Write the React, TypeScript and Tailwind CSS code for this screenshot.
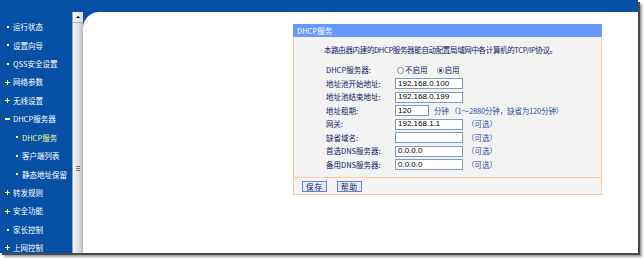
import React from 'react';

type MenuItem = {
  label: string;
  mark: 'dot' | 'plus' | 'minus';
  sub?: boolean;
  active?: boolean;
};

const menu: MenuItem[] = [
  { label: '运行状态', mark: 'dot' },
  { label: '设置向导', mark: 'dot' },
  { label: 'QSS安全设置', mark: 'dot' },
  { label: '网络参数', mark: 'plus' },
  { label: '无线设置', mark: 'plus' },
  { label: 'DHCP服务器', mark: 'minus' },
  { label: 'DHCP服务', mark: 'dot', sub: true, active: true },
  { label: '客户端列表', mark: 'dot', sub: true },
  { label: '静态地址保留', mark: 'dot', sub: true },
  { label: '转发规则', mark: 'plus' },
  { label: '安全功能', mark: 'plus' },
  { label: '家长控制', mark: 'dot' },
  { label: '上网控制', mark: 'plus' },
];

const Mark = ({ type }: { type: MenuItem['mark'] }) => {
  if (type === 'plus') {
    return (
      <span className="relative w-[5px] h-[5px] shrink-0">
        <span className="absolute left-0 top-[2px] w-[5px] h-[1px] bg-[#ffff66]" />
        <span className="absolute left-[2px] top-0 w-[1px] h-[5px] bg-[#ffff66]" />
      </span>
    );
  }
  if (type === 'minus') {
    return <span className="w-[5px] h-[1.5px] bg-[#ffff66] shrink-0" />;
  }
  return <span className="w-[2px] h-[2px] mx-[1.5px] bg-[#ffff66] shrink-0" />;
};

const Sidebar = () => (
  <div className="w-[72px] shrink-0 pt-[5.5px] text-[7.5px] text-white">
    {menu.map((m) => (
      <div
        key={m.label}
        className={`h-[18.45px] flex items-center gap-[2px] ${m.sub ? 'pl-[14px]' : 'pl-[5px]'}`}
      >
        <Mark type={m.mark} />
        <span className={`ml-[1px] whitespace-nowrap ${m.active ? 'text-[#eeff99]' : ''}`}>{m.label}</span>
      </div>
    ))}
  </div>
);

const Scrollbar = () => (
  <div className="w-[11px] shrink-0 flex flex-col bg-gradient-to-r from-[#f4f4f4] via-[#e2e2e2] to-[#bdbdbd] border-l border-[#9ab]">
    <div className="h-[11px] flex items-center justify-center bg-gradient-to-r from-[#fafafa] to-[#d8d8d8] border-b border-[#aaa]">
      <span className="w-0 h-0 border-l-[2px] border-r-[2px] border-b-[2px] border-l-transparent border-r-transparent border-b-black" />
    </div>
    <div className="flex-1 flex flex-col justify-start pt-[143px] items-center">
      <span className="w-[4px] h-[1px] bg-[#777]" />
      <span className="w-[4px] h-[1px] bg-[#777] mt-[1px]" />
      <span className="w-[4px] h-[1px] bg-[#777] mt-[1px]" />
    </div>
  </div>
);

const TextInput = ({ value, w = 'w-[68px]' }: { value: string; w?: string }) => (
  <div className={`${w} h-[11px] shrink-0 border border-[#7f9db9] bg-white pl-[2px] flex items-center text-[8px] text-black font-['Liberation_Sans',sans-serif] leading-none`}>
    {value}
  </div>
);

const Radio = ({ checked }: { checked?: boolean }) => (
  <span className="w-[7px] h-[7px] rounded-full border border-[#8a8a8a] bg-white flex items-center justify-center shrink-0">
    {checked && <span className="w-[3px] h-[3px] rounded-full bg-[#1c3c78]" />}
  </span>
);

const Row = ({ label, children }: { label: string; children: React.ReactNode }) => (
  <div className="h-[13.5px] flex items-center">
    <div className="w-[69px] shrink-0 whitespace-nowrap text-[#10206a]">{label}</div>
    {children}
  </div>
);

const Hint = ({ text }: { text: string }) => (
  <span className="ml-[4px] whitespace-nowrap text-[#2b4da5]">{text}</span>
);

const DhcpPanel = () => (
  <div className="w-[309px] text-[7.5px] leading-[10px]">
    <div className="h-[13px] bg-[#6699ff] text-white pl-[4px] flex items-center">DHCP服务</div>
    <div className="bg-[#f3f3f3] border-x border-b border-[#ffcc99]">
      <div className="pl-[30px] pt-[8px] text-[#10206a] whitespace-nowrap tracking-[-0.35px]">
        本路由器内建的DHCP服务器能自动配置局域网中各计算机的TCP/IP协议。
      </div>
      <div className="pl-[32px] mt-[8.25px]">
        <Row label="DHCP服务器:">
          <div className="flex items-center ml-[2px] text-[#10206a]">
            <Radio />
            <span className="ml-[1px]">不启用</span>
            <span className="ml-[9px]"><Radio checked /></span>
            <span className="ml-[1px]">启用</span>
          </div>
        </Row>
        <Row label="地址池开始地址:">
          <TextInput value="192.168.0.100" />
        </Row>
        <Row label="地址池结束地址:">
          <TextInput value="192.168.0.199" />
        </Row>
        <Row label="地址租期:">
          <TextInput value="120" w="w-[34px]" />
          <span className="ml-[5px] whitespace-nowrap text-[#2b4da5] tracking-[-0.15px]">分钟 （1～2880分钟，缺省为120分钟）</span>
        </Row>
        <Row label="网关:">
          <TextInput value="192.168.1.1" />
          <Hint text="（可选）" />
        </Row>
        <Row label="缺省域名:">
          <TextInput value="" />
          <Hint text="（可选）" />
        </Row>
        <Row label="首选DNS服务器:">
          <TextInput value="0.0.0.0" />
          <Hint text="（可选）" />
        </Row>
        <Row label="备用DNS服务器:">
          <TextInput value="0.0.0.0" />
          <Hint text="（可选）" />
        </Row>
      </div>
      <div className="mt-[5.75px] border-t border-[#ffcc99] pt-[3px] pb-[2px] pl-[8px] flex gap-[10px]">
        <button className="w-[25px] h-[11px] border border-[#6a7fcf] bg-[#e6e8f4] text-[#10206a] text-[7.5px] leading-none tracking-[1px]">保存</button>
        <button className="w-[25px] h-[11px] border border-[#6a7fcf] bg-[#e6e8f4] text-[#10206a] text-[7.5px] leading-none tracking-[1px]">帮助</button>
      </div>
    </div>
  </div>
);

export default function App() {
  return (
    <div className="w-[644px] h-[258px] bg-white overflow-hidden font-['Noto_Sans_CJK_SC',sans-serif]">
      <div className="w-[638px] h-[253px] bg-[#0650a6] flex flex-col shadow-[2px_2px_0_#4a4a4a,4px_4px_2px_#a0a0a0]">
        <div className="h-[12px] shrink-0" />
        <div className="flex-1 flex min-h-0">
          <Sidebar />
          <Scrollbar />
          <div className="flex-1 bg-white rounded-tl-[16px] pl-[210px] pt-[12px]">
            <DhcpPanel />
          </div>
        </div>
      </div>
    </div>
  );
}
